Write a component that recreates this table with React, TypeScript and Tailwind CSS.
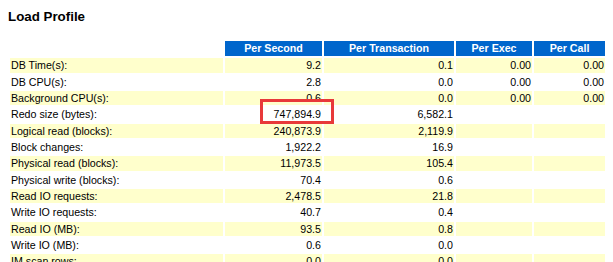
const rows: [string, string, string, string, string][] = [
  ["DB Time(s):", "9.2", "0.1", "0.00", "0.00"],
  ["DB CPU(s):", "2.8", "0.0", "0.00", "0.00"],
  ["Background CPU(s):", "0.6", "0.0", "0.00", "0.00"],
  ["Redo size (bytes):", "747,894.9", "6,582.1", "", ""],
  ["Logical read (blocks):", "240,873.9", "2,119.9", "", ""],
  ["Block changes:", "1,922.2", "16.9", "", ""],
  ["Physical read (blocks):", "11,973.5", "105.4", "", ""],
  ["Physical write (blocks):", "70.4", "0.6", "", ""],
  ["Read IO requests:", "2,478.5", "21.8", "", ""],
  ["Write IO requests:", "40.7", "0.4", "", ""],
  ["Read IO (MB):", "93.5", "0.8", "", ""],
  ["Write IO (MB):", "0.6", "0.0", "", ""],
  ["IM scan rows:", "0.0", "0.0", "", ""],
];

const heads = ["Per Second", "Per Transaction", "Per Exec", "Per Call"];
const widths = ["w-[97px]", "w-[130px]", "w-[76px]", "w-[71px]"];

export default function App() {
  return (
    <div className="relative h-[262px] w-[613px] overflow-hidden bg-white font-['Liberation_Sans',Arial,sans-serif] text-black">
      <h3 className="ml-2 pt-[9px] text-[13.33px] font-bold leading-[normal]">Load Profile</h3>

      <table className="ml-2 mt-[15px] table-fixed border-separate border-spacing-[2px] text-[10.67px] leading-[12.33px]">
        <thead>
          <tr>
            <th className="w-[213px] p-0" />
            {heads.map((h, i) => (
              <th
                key={h}
                className={`${widths[i]} bg-[#0066cc] px-1 pt-px pb-[2px] text-center font-bold text-white`}
              >
                {h}
              </th>
            ))}
          </tr>
        </thead>
        <tbody>
          {rows.map((r, i) => {
            const bg = i % 2 === 0 ? "bg-[#ffffcc]" : "bg-white";
            return (
              <tr key={r[0]}>
                <td className={`${bg} p-px text-left whitespace-nowrap`}>{r[0]}</td>
                {r.slice(1).map((v, j) => (
                  <td key={j} className={`${bg} p-px text-right whitespace-nowrap`}>
                    {v}
                  </td>
                ))}
              </tr>
            );
          })}
        </tbody>
      </table>

      {/* highlight box drawn over the redo value */}
      <div className="pointer-events-none absolute left-[260px] top-[99px] h-[25px] w-[74px] border-[3px] border-[#e8393a]" />
    </div>
  );
}
